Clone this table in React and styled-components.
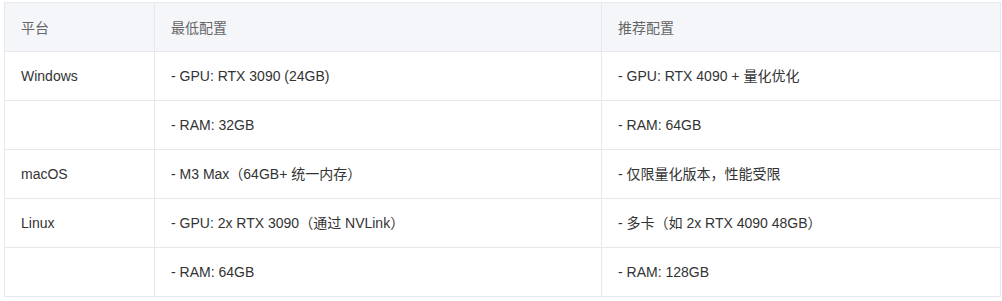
import React from "react";
import styled, { createGlobalStyle } from "styled-components";

const Global = createGlobalStyle`
  html, body { margin: 0; padding: 0; background: #fff; }
  body { font-family: "Liberation Sans", Arial, "Noto Sans CJK SC", sans-serif; }
`;

const Wrap = styled.div`
  padding: 2px 2px 0 4px;
`;

const Table = styled.table`
  width: 996px;
  border-collapse: collapse;
  table-layout: fixed;
  font-size: 14px;
  color: #333;
`;

const Th = styled.th`
  background: #f5f6fa;
  border: 1px solid #e6e8ee;
  color: #666;
  font-weight: normal;
  text-align: left;
  padding: 0 16px;
  height: 49px;
  box-sizing: border-box;
  width: ${(p) => p.$w}px;
`;

const Td = styled.td`
  border: 1px solid #e6e8ee;
  text-align: left;
  padding: 0 16px;
  height: 48px;
  line-height: 20px;
`;

const rows = [
  ["Windows", "- GPU: RTX 3090 (24GB)", "- GPU: RTX 4090 + 量化优化"],
  ["", "- RAM: 32GB", "- RAM: 64GB"],
  ["macOS", "- M3 Max（64GB+ 统一内存）", "- 仅限量化版本，性能受限"],
  ["Linux", "- GPU: 2x RTX 3090（通过 NVLink）", "- 多卡（如 2x RTX 4090 48GB）"],
  ["", "- RAM: 64GB", "- RAM: 128GB"],
];

export default function App() {
  return (
    <Wrap>
      <Global />
      <Table>
        <thead>
          <tr>
            <Th $w={150}>平台</Th>
            <Th $w={447}>最低配置</Th>
            <Th $w={399}>推荐配置</Th>
          </tr>
        </thead>
        <tbody>
          {rows.map((r, i) => (
            <tr key={i}>
              {r.map((c, j) => (
                <Td key={j}>{c}</Td>
              ))}
            </tr>
          ))}
        </tbody>
      </Table>
    </Wrap>
  );
}
